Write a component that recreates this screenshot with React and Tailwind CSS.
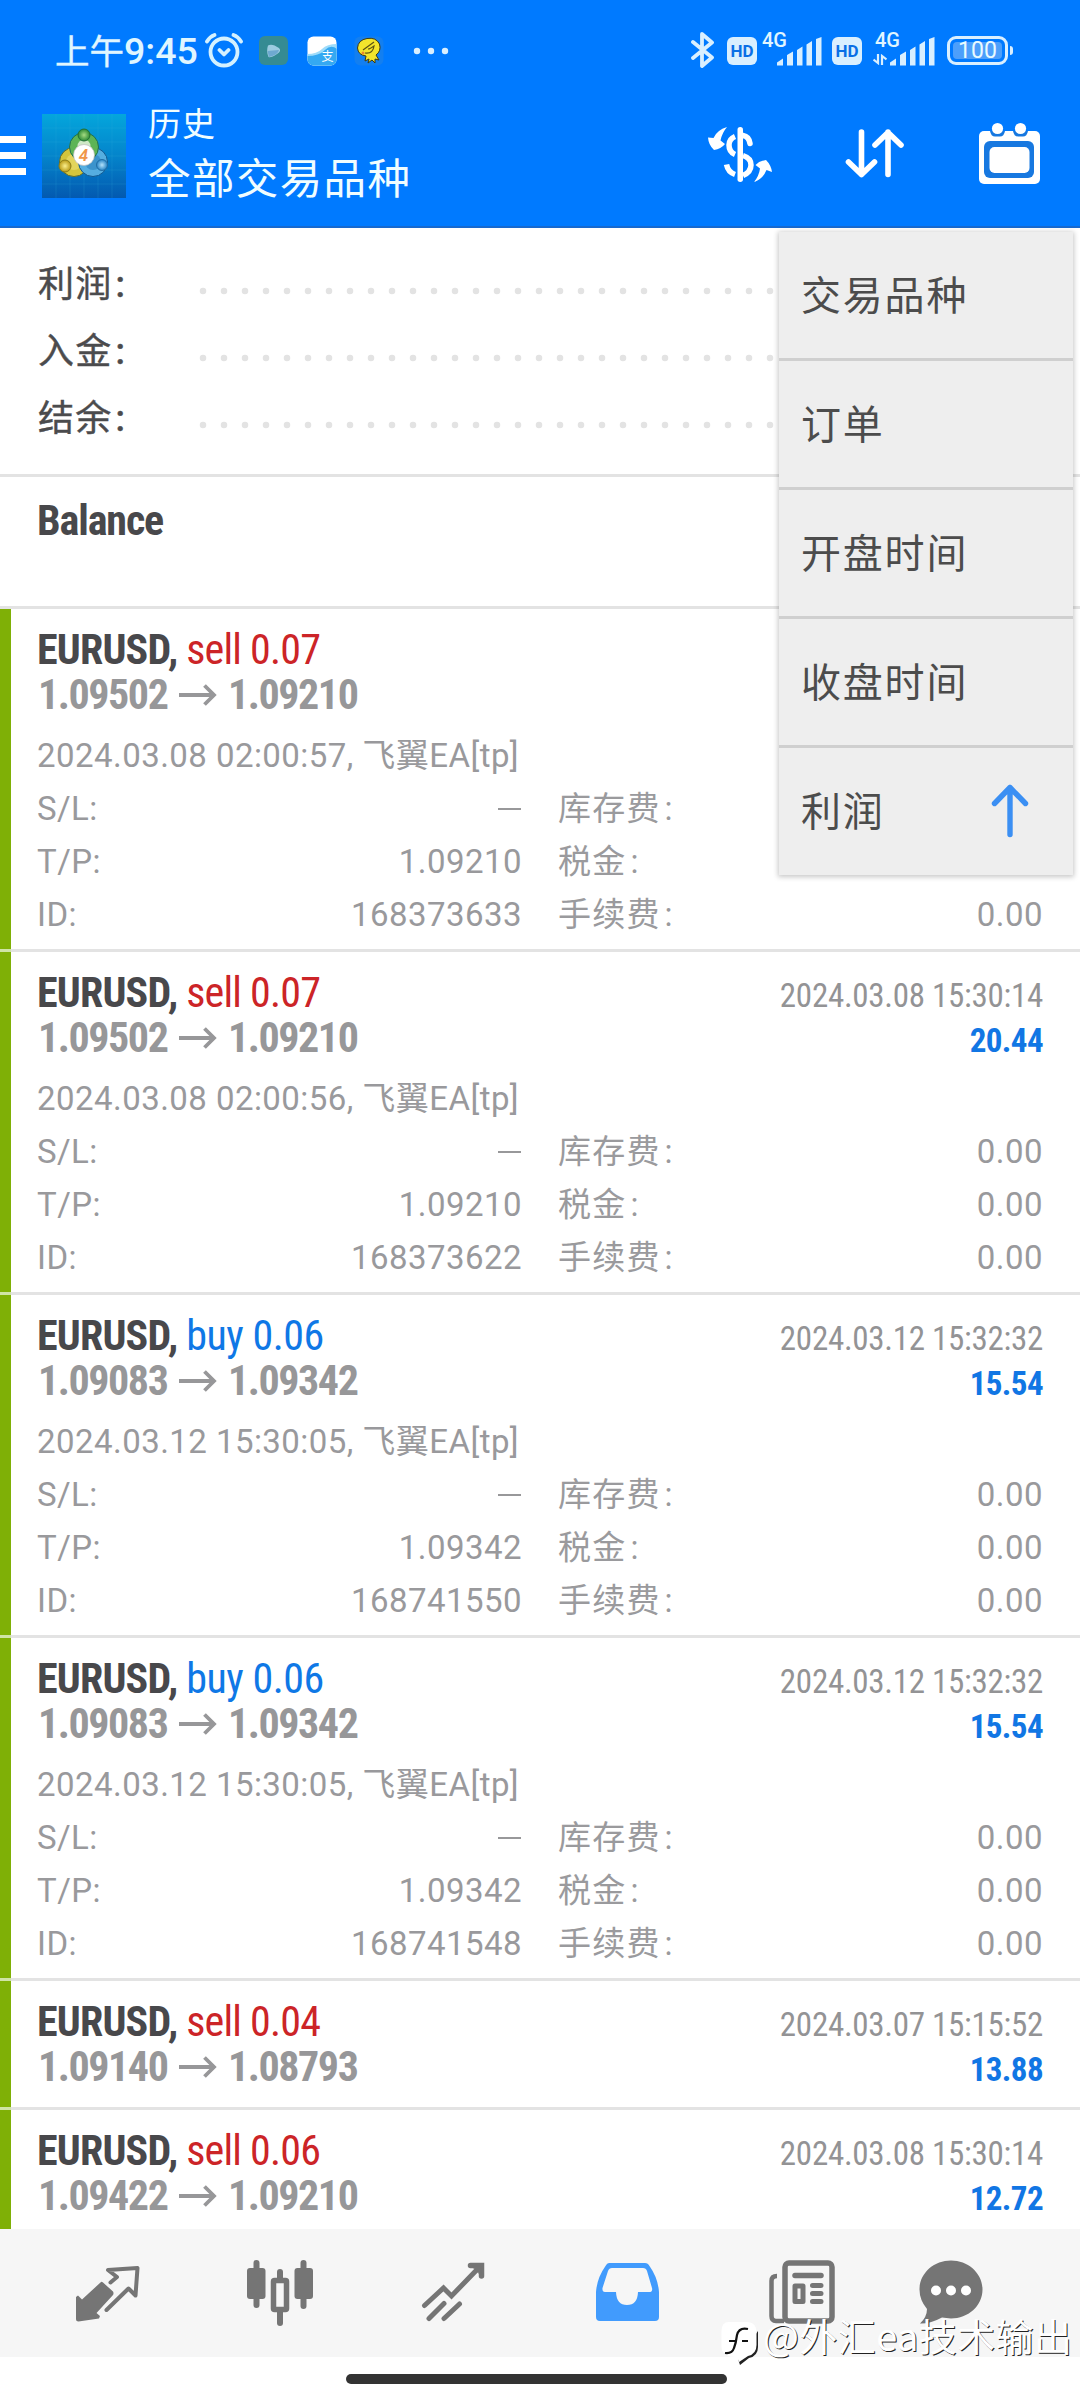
import React from 'react';

const menuItems = ['交易品种', '订单', '开盘时间', '收盘时间', '利润'];

const deals = [
  { side: 'sell', volume: '0.07', open: '1.09502', close: '1.09210', opened: '2024.03.08 02:00:57', tp: '1.09210', id: '168373633' },
  { side: 'sell', volume: '0.07', open: '1.09502', close: '1.09210', closed: '2024.03.08 15:30:14', profit: '20.44', opened: '2024.03.08 02:00:56', tp: '1.09210', id: '168373622' },
  { side: 'buy', volume: '0.06', open: '1.09083', close: '1.09342', closed: '2024.03.12 15:32:32', profit: '15.54', opened: '2024.03.12 15:30:05', tp: '1.09342', id: '168741550' },
  { side: 'buy', volume: '0.06', open: '1.09083', close: '1.09342', closed: '2024.03.12 15:32:32', profit: '15.54', opened: '2024.03.12 15:30:05', tp: '1.09342', id: '168741548' },
  { side: 'sell', volume: '0.04', open: '1.09140', close: '1.08793', closed: '2024.03.07 15:15:52', profit: '13.88' },
  { side: 'sell', volume: '0.06', open: '1.09422', close: '1.09210', closed: '2024.03.08 15:30:14', profit: '12.72' },
];

const Signal = ({ className }) => (
  <svg className={className} width="45" height="29" viewBox="0 0 45 29" fill="#d9efff">
    <path d="M0 28.5v-3l6-4v7zM10 28.5V18l6-3.500v14zM20 28.500V13l5.500-3.500v19zM29.500 28.500V7.500L35 4v24.500zM39 28.500V2l5.500-2v28.500z" />
  </svg>
);

const HdBadge = ({ className }) => (
  <div className={`w-[30px] h-7 rounded-md bg-[#d9efff] text-[#0a6fe6] text-[17px] leading-7 font-bold text-center ${className}`}>HD</div>
);

const StatusBar = () => (
  <div className="h-[100px] relative flex items-start text-[#e0f6ff]">
    <div className="ml-[55px] mt-[25px] w-[146px] whitespace-nowrap text-[37.500px] leading-[50px] font-medium">
      <span className="inline-block text-[34.500px] font-['Noto_Sans_CJK_SC'] font-normal leading-[48px] [-webkit-text-stroke:0.4px]">上午</span>9:45
    </div>
    <svg className="ml-[4px] mt-[32px]" width="38" height="36" viewBox="0 0 38 36" fill="none" stroke="#d4f1ff" strokeWidth="3.800" strokeLinecap="round" strokeLinejoin="round">
      <circle cx="19" cy="20" r="13.500" />
      <path d="M14.500 18l4.500 4.500 4.500-4.500M2 9.500Q5 4.500 9.500 3M36 9.500Q33 4.500 28.500 3" />
    </svg>
    <svg className="ml-[16px] mt-[36px]" width="29" height="29" viewBox="0 0 29 29">
      <rect width="29" height="29" rx="6" fill="#358b93" />
      <path d="M9 9.500Q13 7 20 12Q23 15 18 18Q12 22 9.500 21Q7 15 9 9.500z" fill="#9ccbe0" />
      <path d="M8.500 15L20 14Q19 19 10 21z" fill="#6ea9d0" />
    </svg>
    <svg className="ml-[19px] mt-[36px]" width="30" height="30" viewBox="0 0 30 30">
      <defs>
        <clipPath id="trans"><rect x="0.500" y="0.500" width="29" height="29" rx="6" /></clipPath>
      </defs>
      <g clipPath="url(#trans)">
        <rect width="30" height="30" fill="#fff" />
        <path d="M0 18Q10 18 15 13T30 8V30H0z" fill="#9fdcfa" />
        <path d="M0 20Q12 20 18 14T30 13V30H0z" fill="#35a9f2" />
      </g>
      <text x="20.500" y="25" fontSize="12" textAnchor="middle" fill="#fff" fontFamily="Noto Sans CJK SC, sans-serif">支</text>
    </svg>
    <svg className="ml-[17px] mt-[36px]" width="30" height="30" viewBox="0 0 30 30">
      <rect x="0.500" y="0.500" width="29" height="29" rx="6" fill="#137ff0" />
      <path d="M13 2.500Q22 1 25.500 8Q27.500 15 22 19L25 24L21 23L21 27L18 24L14 27L15 23L11 25L12 20Q4 19 3.500 12Q4 4 13 2.500z" fill="#f2e42c" stroke="#3f3a12" strokeWidth="1" />
      <path d="M9 14l11-8M11 17q8 1 9-7q-4 3-6 3" fill="none" stroke="#5b5314" strokeWidth="1.200" />
      <circle cx="9" cy="17" r="1.500" fill="#e8852c" />
    </svg>
    <svg className="ml-[29px] mt-[47px]" width="36" height="8" viewBox="0 0 36 8" fill="#d9efff">
      <circle cx="4" cy="4" r="3.200" /><circle cx="18" cy="4" r="3.200" /><circle cx="32" cy="4" r="3.200" />
    </svg>

    <svg className="ml-[242px] mt-[32px]" width="24" height="36" viewBox="0 0 24 36" fill="none" stroke="#d9efff" strokeWidth="3.800" strokeLinejoin="round" strokeLinecap="round">
      <path d="M2 10l19 15.500-10 8.500V2l10 8.500L2 26" />
    </svg>
    <HdBadge className="ml-[12px] mt-[37px]" />
    <div className="ml-[5px] mt-[30px] w-[15px] text-[20px] leading-5 font-medium">4G</div>
    <Signal className="mt-[37px]" />
    <HdBadge className="ml-[10px] mt-[37px]" />
    <div className="ml-[13px] mt-[30px] w-[15px]">
      <div className="text-[20px] leading-5 font-medium">4G</div>
      <svg className="-ml-[2px] mt-[4px]" width="14" height="11" viewBox="0 0 14 11" fill="none" stroke="#d9efff" strokeWidth="2.200">
        <path d="M5 0v9L0.500 5.500M9 11V2l4.500 3.500" />
      </svg>
    </div>
    <Signal className="mt-[37px]" />
    <div className="ml-[12px] mt-[36px] flex items-center">
      <div className="w-[61px] h-[29px] rounded-[9px] border-[3px] border-[#d9efff] p-[3px]">
        <div className="h-full rounded-[4px] bg-[#4c9ffb] text-[23px] leading-[18px] text-center text-[#e8faff]">100</div>
      </div>
      <div className="ml-[2px] w-[3px] h-[9px] rounded-r bg-[#d9efff]" />
    </div>
  </div>
);

const Logo = () => (
  <svg className="ml-4" width="84" height="84" viewBox="0 0 84 84">
    <defs>
      <linearGradient id="sky" x1="0" y1="0" x2="0" y2="1">
        <stop offset="0" stopColor="#04a6dc" />
        <stop offset="0.5" stopColor="#0484cb" />
        <stop offset="1" stopColor="#0359b0" />
      </linearGradient>
      <radialGradient id="green"><stop offset="0" stopColor="#a6dc82" /><stop offset="1" stopColor="#2d8a35" /></radialGradient>
      <radialGradient id="yellow"><stop offset="0" stopColor="#fbf08e" /><stop offset="1" stopColor="#b99a15" /></radialGradient>
      <radialGradient id="blue"><stop offset="0" stopColor="#b4e2fb" /><stop offset="1" stopColor="#2583c4" /></radialGradient>
    </defs>
    <rect width="84" height="84" fill="url(#sky)" />
    <path d="M0 42h84M0 56h84M0 70h84M0 14h84M0 28h84M14 0v84M28 0v84M42 0v84M56 0v84M70 0v84" stroke="#35b3e6" strokeOpacity="0.18" />
    <circle cx="32" cy="48" r="14.500" fill="#d3c53c" stroke="#5d6b2e" />
    <circle cx="32" cy="48" r="8" fill="#e3d55c" />
    <circle cx="51" cy="48" r="14.500" fill="#55aee0" stroke="#12598f" />
    <circle cx="51" cy="48" r="8" fill="#3c93cc" />
    <circle cx="42" cy="33" r="14.500" fill="#5db455" stroke="#1f6f50" />
    <circle cx="42" cy="32" r="6.500" fill="#cfe8c6" />
    <circle cx="42" cy="21" r="6" fill="url(#green)" stroke="#236f35" />
    <circle cx="23" cy="52" r="6" fill="url(#yellow)" stroke="#8b7c1a" />
    <circle cx="60" cy="51" r="5.500" fill="url(#blue)" stroke="#226da5" />
    <circle cx="42" cy="41" r="10.500" fill="#fff" stroke="#bbb" strokeWidth="0.700" />
    <text x="41.500" y="47" fontSize="17" fontWeight="600" fontStyle="italic" textAnchor="middle" fill="#f0974a" fontFamily="Roboto, sans-serif">4</text>
  </svg>
);

const Header = () => (
  <header className="h-[228px] bg-[#007aff] border-b-2 border-[#1769cf]">
    <StatusBar />
    <div className="h-[111px] flex items-center text-white">
      <div className="w-[26px] flex flex-col gap-[9px]">
        <div className="h-[7px] bg-white" />
        <div className="h-[7px] bg-white" />
        <div className="h-[7px] bg-white" />
      </div>
      <Logo />
      <div className="ml-[22px] mb-[2px] w-[270px] font-['Noto_Sans_CJK_SC'] text-[#f0fdff] whitespace-nowrap">
        <div className="text-[33px] leading-[42px] tracking-[1px]">历史</div>
        <div className="text-[42.500px] leading-[65px] tracking-[1.400px]">全部交易品种</div>
      </div>
      <svg className="ml-[290px] mb-[4px]" width="66" height="60" viewBox="0 0 66 60" fill="#fff">
        <path d="M19 3Q9 6 5.500 14L0 13.500Q0.500 21 6 26Q13 25 17 20L12.500 16.500Q14 9 19 3z" />
        <path d="M46 58Q55 55 58.500 46L64 48Q63 41 58 36Q51 37 47.500 41L52 44.500Q51 52 46 58z" />
        <rect x="29.500" y="3" width="5.500" height="55" rx="2.700" />
        <path d="M27 12.500Q21 15 21 21Q21 28 27 30.500" fill="none" stroke="#fff" strokeWidth="5.500" />
        <path d="M35 11.500Q41 12.500 42 19.500" fill="none" stroke="#fff" strokeWidth="5.500" strokeLinecap="round" />
        <path d="M35 31.500Q43 34 43 41Q43 48 35 51.500" fill="none" stroke="#fff" strokeWidth="5.500" />
        <path d="M27 50.500Q20 48 18.500 40.500" fill="none" stroke="#fff" strokeWidth="5.500" />
      </svg>
      <svg className="ml-[71px] mb-[3px]" width="60" height="50" viewBox="0 0 60 50" fill="none" stroke="#fff" strokeWidth="5.600" strokeLinecap="round" strokeLinejoin="round">
        <path d="M16.500 3v42.500M3.500 33l13 12.500 13-12.500M43 45.500V3M30 16L43 3.500 56 16" />
      </svg>
      <svg className="ml-[74px] mb-[5px]" width="62" height="62" viewBox="0 0 62 62">
        <rect x="0" y="9" width="61" height="53" rx="5" fill="#fff" />
        <rect x="5" y="19" width="50" height="37" rx="6" fill="#1778e0" />
        <rect x="10.500" y="25" width="40" height="26" rx="5" fill="#fff" />
        <path d="M11 9h15q-1 5.500-5 5.500h-5q-4 0-5-5.500zM34 9h15q-1 5.500-5 5.500h-5q-4 0-5-5.500z" fill="#1778e0" />
        <circle cx="18.500" cy="6.500" r="5.600" fill="#fff" />
        <circle cx="41.500" cy="6.500" r="5.600" fill="#fff" />
      </svg>
    </div>
  </header>
);

const SummaryRow = ({ label }) => (
  <div className="h-[67px] flex items-center">
    <div className="mt-[3px] w-[161px] text-[36px] leading-[64px] tracking-[1.200px] font-['Roboto','Noto_Sans_CJK_SC',sans-serif] text-[#4b4b4d] [-webkit-text-stroke:0.4px]">{label}<span className="ml-[3px] font-medium">:</span></div>
    <svg className="mt-[15px]" width="860" height="8">
      <line x1="4" y1="4" x2="850" y2="4" stroke="#e3e3e3" strokeWidth="6.500" strokeLinecap="round" strokeDasharray="0 21" />
    </svg>
  </div>
);

const Detail = ({ label, value }) => (
  <div className="h-[53px] flex justify-between">
    <span>{label}</span>
    <span>{value}</span>
  </div>
);

const FeeLabel = ({ children }) => (
  <span className="tracking-[1.200px] text-[#9a9a9d]">{children}<span className="ml-1">:</span></span>
);

const Deal = ({ deal }) => (
  <div className="border-b-[3px] border-[#e3e3e3] flex">
    <div className="w-[11px] shrink-0 bg-[#7fb006] -mb-[3px] border-b-[3px] border-[#cfe4a6]" />
    <div className={`flex-1 pl-[26px] pr-[37px] pt-[18px] ${deal.id ? 'pb-2' : 'pb-[18px]'}`}>
      <div className="flex justify-between font-['Roboto_Condensed',Roboto,sans-serif] leading-[45px]">
        <div className="text-[42px] font-bold">
          <div className="tracking-[-0.800px] text-[#48484b]">
            EURUSD,{' '}
            <span className={deal.side === 'sell' ? 'font-normal text-[#cc2427]' : 'font-normal tracking-[-0.500px] text-[#0f78e6]'}>{deal.side} {deal.volume}</span>
          </div>
          <div className="flex items-center text-[#979799] tracking-[-1.450px]">
            <span className="ml-px w-[130px]">{deal.open}</span>
            <svg className="ml-[11px] mt-[1px]" width="38" height="22" viewBox="0 0 38 22" fill="none" stroke="#979799" strokeWidth="3.800">
              <path d="M0 11h35M25.500 1.500l9.500 9.500-9.500 9.500" />
            </svg>
            <span className="ml-[11px]">{deal.close}</span>
          </div>
        </div>
        {deal.closed && (
          <div className="pt-[3px] -mb-[3px] text-[33px] text-right">
            <div className="tracking-[-0.280px] text-[#939395]">{deal.closed}</div>
            <div className="tracking-[-0.600px] font-bold text-[#1176e4]">{deal.profit}</div>
          </div>
        )}
      </div>
      {deal.id && (
        <div className="mt-[12px] text-[33px] leading-[53px] tracking-[0.450px] text-[#99999c]">
          <div className="h-[53px] whitespace-nowrap">{deal.opened}, 飞翼EA[tp]</div>
          <div className="flex">
            <div className="w-[485px]">
              <Detail label="S/L:" value={<div className="mt-[26px] mr-px w-[23px] h-[2px] bg-[#98989a]" />} />
              <Detail label="T/P:" value={deal.tp} />
              <Detail label="ID:" value={deal.id} />
            </div>
            <div className="ml-[36px] flex-1">
              <Detail label={<FeeLabel>库存费</FeeLabel>} value="0.00" />
              <Detail label={<FeeLabel>税金</FeeLabel>} value="0.00" />
              <Detail label={<FeeLabel>手续费</FeeLabel>} value="0.00" />
            </div>
          </div>
        </div>
      )}
    </div>
  </div>
);

const SortMenu = () => (
  <div className="absolute top-[232px] left-[779px] w-[294px] bg-[#eeeeee] shadow-[0_1px_5px_1px_rgba(0,0,0,0.22)]">
    {menuItems.map((item) => (
      <div key={item} className="h-[129px] last:h-[127px] border-b-[3px] last:border-b-0 border-[#cfcfcf] pl-[22px] pr-[44px] pb-[5px] flex items-center justify-between font-['Noto_Sans_CJK_SC'] text-[40px] tracking-[1.800px] text-[#4c4c4c]">
        {item}
        {item === '利润' && (
          <svg className="mt-[3px]" width="38" height="54" viewBox="0 0 38 54" fill="none" stroke="#3b8ff3" strokeWidth="5.400" strokeLinecap="round" strokeLinejoin="round">
            <path d="M19 50.500V3.500M3.500 19.500L19 3.500l15.500 16" />
          </svg>
        )}
      </div>
    ))}
  </div>
);

const TabBar = () => (
  <nav className="h-[128px] shrink-0 bg-[#f6f6f6] pl-[74px] pt-[31px] flex items-start">
    <svg width="66" height="66" viewBox="0 0 66 66">
      <path d="M26.500 22.500Q27.500 21 29 22.500L39 31.500Q40 33 39 35L22.500 53l3.500 3-1 2.500L4.500 61.500Q2 61.500 2 59V37L4 35.500l4 4z" fill="#757575" />
      <path d="M36.500 22.500l6.500-5.500-9-7 29.500-2L61.500 35.500l-7-7L32.500 50" fill="none" stroke="#757575" strokeWidth="4" strokeLinejoin="round" strokeLinecap="round" />
    </svg>
    <svg className="ml-[106px]" width="68" height="66" viewBox="0 0 68 66" fill="#757575">
      <rect x="7.500" y="0" width="6" height="48" rx="3" />
      <rect x="1" y="8" width="18.500" height="31" rx="3" />
      <rect x="54.500" y="0" width="6" height="49" rx="3" />
      <rect x="48.500" y="8" width="18.500" height="31" rx="3" />
      <rect x="31" y="9" width="6" height="57" rx="3" />
      <rect x="27.500" y="20.500" width="13" height="29" rx="1" fill="#f6f6f6" stroke="#757575" strokeWidth="5.500" />
    </svg>
    <svg className="ml-[106px]" width="66" height="66" viewBox="0 0 66 66" fill="none" stroke="#757575" strokeWidth="5" strokeLinejoin="miter" strokeLinecap="round">
      <path d="M4.500 45.500L23.500 28l8 8L60 6.500M9 58.500L24 43.500M24 58.500L39.500 44" />
      <path d="M50.500 5.500H61.500V16" strokeWidth="5.500" />
      <path d="M52 6h9v9z" fill="#757575" strokeWidth="1" />
    </svg>
    <svg className="ml-[109px]" width="66" height="66" viewBox="0 0 66 66">
      <path fillRule="evenodd" d="M14 3H50Q53 3 54.500 6Q63 18 64 32V57Q64 61 60 61H5Q1 61 1 57V32Q2 18 10.500 6Q12 3 14 3zM17 8Q14 8 13 11L7.500 28Q7 32 10 32H21Q21.500 45 32 45T43 32H54Q58 32 57 28L52 11Q51 8 48 8z" fill="#419bfd" />
    </svg>
    <svg className="ml-[107px]" width="68" height="66" viewBox="0 0 68 66" fill="none" stroke="#757575" strokeLinecap="round" strokeLinejoin="round">
      <rect x="17" y="3" width="47" height="58" rx="4" strokeWidth="5.500" />
      <path d="M9 16Q3.500 16 3.500 21V56Q3.500 61 8 61H16" strokeWidth="4.500" strokeLinecap="butt" />
      <path d="M27 15.500H53" strokeWidth="5.500" />
      <rect x="27" y="26" width="8" height="15.500" strokeWidth="5" />
      <path d="M44.500 25.500H53M44.500 33.500H53M44.500 41.500H53" strokeWidth="5" />
    </svg>
    <svg className="ml-[82px]" width="66" height="66" viewBox="0 0 66 66">
      <path d="M33 0.500C50 0.500 64.500 13 64.500 29.500S50 58.500 33 58.500L24 57.500Q12 64 2 63.500Q9 57 9 49Q1.500 40 1.500 29.500C1.500 13 16 0.500 33 0.500z" fill="#757575" />
      <g fill="#fff"><circle cx="18" cy="30.500" r="5" /><circle cx="33" cy="30.500" r="5" /><circle cx="48" cy="30.500" r="5" /></g>
    </svg>
  </nav>
);

const Watermark = () => (
  <div className="absolute left-[720px] top-[2313px] flex items-start whitespace-nowrap">
    <svg className="mt-[6px]" width="43" height="50" viewBox="0 0 43 50">
      <path d="M38 12V28Q38 37 29 39L20 46L18 40z" fill="#222" />
      <path d="M9 3H28Q36.500 4 36.500 13V26Q36.500 35 28 37L19 43L17 38Q1.500 38 1.500 28V12Q1.500 3 9 3z" fill="#fff" />
      <path d="M28 10Q19 8 17 16Q16 24 14 29Q12 35 5 34M9 22h6M22 22h6" fill="none" stroke="#111" strokeWidth="2.200" />
    </svg>
    <span className="font-['Noto_Sans_CJK_SC'] font-normal text-[38px] leading-[44px] tracking-[0.400px] text-white [text-shadow:1px_1px_0_#222]">@外汇ea技术输出</span>
  </div>
);

export default function App() {
  return (
    <div className="relative w-[1080px] h-[2400px] overflow-hidden bg-white flex flex-col font-['Roboto','Noto_Sans_CJK_SC',sans-serif]">
      <Header />
      <main className="h-[2001px] overflow-hidden">
        <section className="h-[249px] pl-[38px] pt-[22px] border-b-[3px] border-[#e3e3e3]">
          <SummaryRow label="利润" />
          <SummaryRow label="入金" />
          <SummaryRow label="结余" />
        </section>
        <div className="h-[132px] pl-[37px] pt-[21px] border-b-[3px] border-[#e3e3e3] font-['Roboto_Condensed',Roboto,sans-serif] text-[42px] leading-[45px] tracking-[-1.100px] font-bold text-[#48484b]">Balance</div>
        {deals.map((deal, i) => (
          <Deal key={i} deal={deal} />
        ))}
      </main>
      <TabBar />
      <footer className="h-[43px] pt-[17px] flex justify-center">
        <div className="mr-[7px] w-[381px] h-[10px] rounded-full bg-[#333333]" />
      </footer>
      <SortMenu />
      <Watermark />
    </div>
  );
}
